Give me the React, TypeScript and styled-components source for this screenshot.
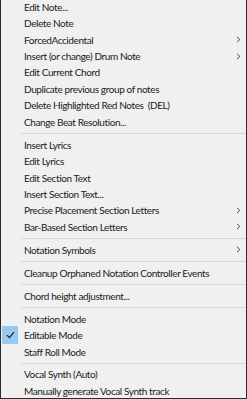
import React from "react";
import styled, { createGlobalStyle } from "styled-components";

const Global = createGlobalStyle`
  html, body { margin: 0; padding: 0; background: #f0f0f0; }
  * { box-sizing: border-box; }
`;

const Menu = styled.div`
  width: 247px;
  height: 399px;
  overflow: hidden;
  background: #f0f0f0;
  border-left: 1px solid #2a2a2a;
  border-right: 1px solid #2a2a2a;
  border-bottom: 1px solid #2a2a2a;
  font-family: Lato, "Open Sans", sans-serif;
  font-size: 10px;
  letter-spacing: -0.4px;
  color: #1b1b1b;
`;

const List = styled.div`
  display: flex;
  flex-direction: column;
  margin-top: -1.5px;
`;

const Row = styled.div`
  position: relative;
  height: 16.45px;
  display: flex;
  align-items: center;
  padding-left: 23px;
  padding-right: 5px;
  white-space: nowrap;
`;

const Label = styled.span`
  flex: 1;
  white-space: pre;
`;

const Arrow = styled.svg`
  width: 5px;
  height: 7px;
`;

const Check = styled.div`
  position: absolute;
  left: 1px;
  top: -1px;
  width: 16px;
  height: 18px;
  background: #99c9ef;
  display: flex;
  align-items: center;
  justify-content: center;
`;

const Separator = styled.div`
  height: 6.5px;
  display: flex;
  align-items: center;
  padding-left: 20px;
  &::after {
    content: "";
    flex: 1;
    height: 1px;
    background: #d7d7d7;
  }
`;

type Item = { label: string; sub?: boolean; checked?: boolean } | "sep";

const items: Item[] = [
  { label: "Edit Note..." },
  { label: "Delete Note" },
  { label: "ForcedAccidental", sub: true },
  { label: "Insert (or change) Drum Note", sub: true },
  { label: "Edit Current Chord" },
  { label: "Duplicate previous group of notes" },
  { label: "Delete Highlighted Red Notes  (DEL)" },
  { label: "Change Beat Resolution..." },
  "sep",
  { label: "Insert Lyrics" },
  { label: "Edit Lyrics" },
  { label: "Edit Section Text" },
  { label: "Insert Section Text..." },
  { label: "Precise Placement Section Letters", sub: true },
  { label: "Bar-Based Section Letters", sub: true },
  "sep",
  { label: "Notation Symbols", sub: true },
  "sep",
  { label: "Cleanup Orphaned Notation Controller Events" },
  "sep",
  { label: "Chord height adjustment..." },
  "sep",
  { label: "Notation Mode" },
  { label: "Editable Mode", checked: true },
  { label: "Staff Roll Mode" },
  "sep",
  { label: "Vocal Synth (Auto)" },
  { label: "Manually generate Vocal Synth track" },
];

export default function App() {
  return (
    <>
      <Global />
      <Menu>
        <List>
          {items.map((it, i) =>
            it === "sep" ? (
              <Separator key={i} />
            ) : (
              <Row key={i}>
                {it.checked && (
                  <Check>
                    <svg width="9" height="8" viewBox="0 0 9 8">
                      <path d="M1 4.2 L3.4 6.6 L8 1.2" fill="none" stroke="#1a1a1a" strokeWidth="1.1" />
                    </svg>
                  </Check>
                )}
                <Label>{it.label}</Label>
                {it.sub && (
                  <Arrow viewBox="0 0 5 7">
                    <path d="M1 0.8 L3.8 3.5 L1 6.2" fill="none" stroke="#444" strokeWidth="1" />
                  </Arrow>
                )}
              </Row>
            )
          )}
        </List>
      </Menu>
    </>
  );
}
